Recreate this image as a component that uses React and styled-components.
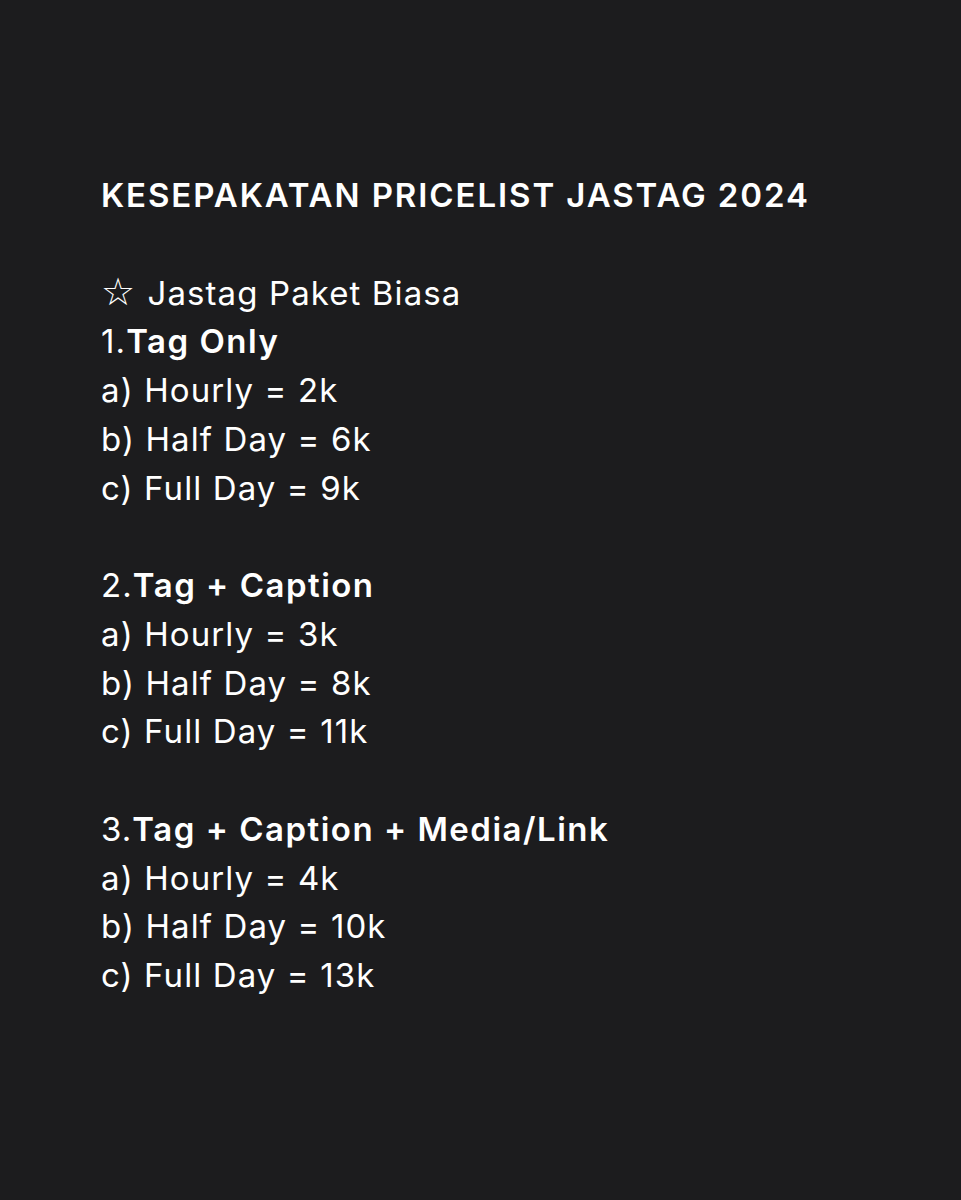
import React from 'react';
import styled, { createGlobalStyle } from 'styled-components';

const GlobalStyle = createGlobalStyle`
  html, body {
    margin: 0;
    padding: 0;
    background: #1c1c1e;
  }
`;

const Page = styled.div`
  box-sizing: border-box;
  width: 961px;
  min-height: 1200px;
  padding: 171px 0 0 101px;
  background: #1c1c1e;
  color: #ffffff;
  font-family: Inter, "Liberation Sans", sans-serif;
  font-size: 33px;
  line-height: 48.75px;
  letter-spacing: 1.1px;
  -webkit-font-smoothing: antialiased;
`;

const Line = styled.div`
  height: 48.75px;
  white-space: pre;
`;

const Title = styled(Line)`
  font-weight: 600;
  letter-spacing: 1.9px;
`;

const Strong = styled.span`
  font-weight: 600;
  letter-spacing: 1.5px;
`;

const Star = styled.span`
  font-family: "DejaVu Sans", sans-serif;
  font-size: 38px;
  line-height: 0;
  letter-spacing: 0;
  margin-right: 2px;
`;

const packages = [
  {
    name: 'Tag Only',
    prices: ['2k', '6k', '9k'],
  },
  {
    name: 'Tag + Caption',
    prices: ['3k', '8k', '11k'],
  },
  {
    name: 'Tag + Caption + Media/Link',
    prices: ['4k', '10k', '13k'],
  },
];

const labels = ['a) Hourly = ', 'b) Half Day = ', 'c) Full Day = '];

export default function App() {
  return (
    <>
      <GlobalStyle />
      <Page>
        <Title>KESEPAKATAN PRICELIST JASTAG 2024</Title>
        <Line />
        <Line>
          <Star>☆</Star> Jastag Paket Biasa
        </Line>
        {packages.map((pkg, i) => (
          <React.Fragment key={pkg.name}>
            {i > 0 && <Line />}
            <Line>
              {i + 1}.<Strong>{pkg.name}</Strong>
            </Line>
            {pkg.prices.map((price, j) => (
              <Line key={labels[j]}>
                {labels[j]}
                {price}
              </Line>
            ))}
          </React.Fragment>
        ))}
      </Page>
    </>
  );
}
